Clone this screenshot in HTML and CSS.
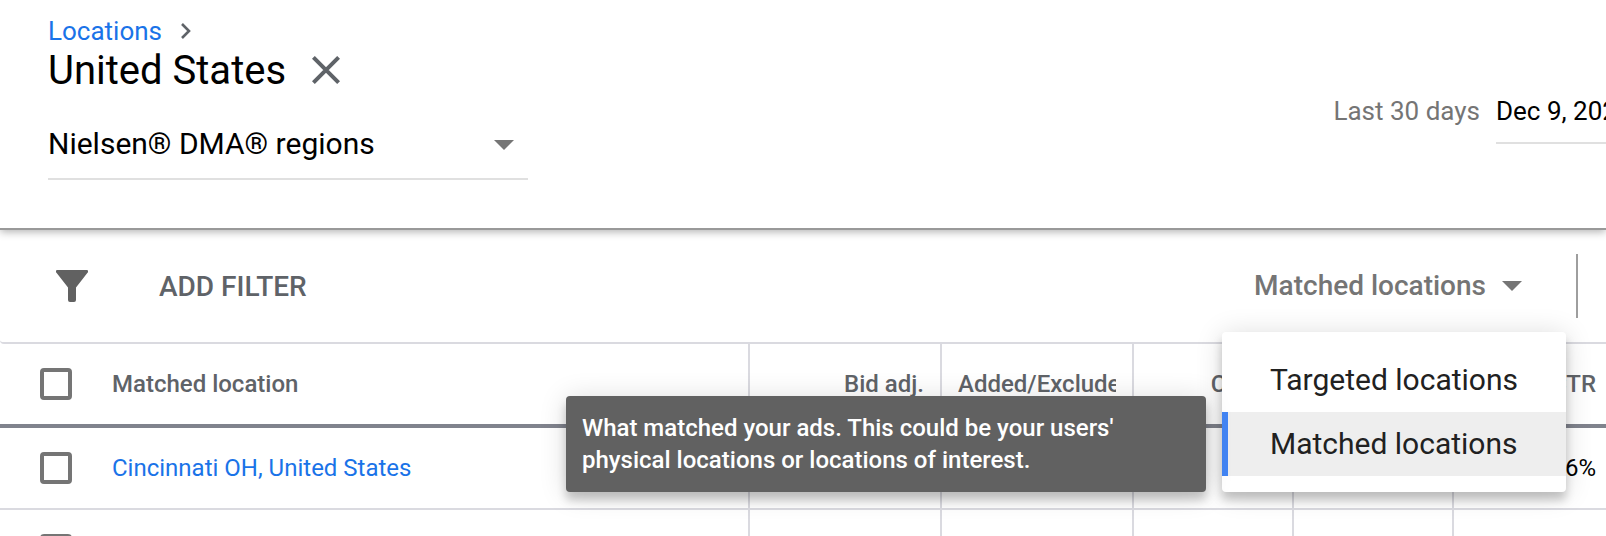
FILE: index.html
```html
<!DOCTYPE html>
<html lang="en">
<head>
<meta charset="utf-8">
<meta name="viewport" content="width=device-width, initial-scale=1">
<title>Locations</title>
<link rel="stylesheet" href="styles.css">
</head>
<body>
<header class="header">
  <div class="heading">
    <nav class="breadcrumb" aria-label="Breadcrumb">
      <a class="link" href="#locations">Locations</a>
      <svg class="chevron" viewBox="0 0 12 16" aria-hidden="true"><path d="M2 1l7 7-7 7" fill="none" stroke="#5f6368" stroke-width="2.6"/></svg>
    </nav>
    <div class="title-row">
      <h1 class="title">United States</h1>
      <button class="icon-button" type="button" aria-label="Close">
        <svg class="close" viewBox="0 0 28 28" aria-hidden="true"><path d="M1.4 1.4l25.200 25.200M26.600 1.400l-25.200 25.200" fill="none" stroke="#5f6368" stroke-width="4"/></svg>
      </button>
    </div>
    <div class="region">
      <select class="region-select" aria-label="Location type">
        <option>Nielsen® DMA® regions</option>
      </select>
      <svg class="arrow" viewBox="0 0 20 10" aria-hidden="true"><path d="M0 0h20L10 10z" fill="#757575"/></svg>
    </div>
  </div>
  <div class="dates">
    <span class="dates-label">Last 30 days</span>
    <button class="dates-value" type="button">Dec 9, 2020 – Jan 7, 2021</button>
  </div>
</header>
<main>
  <div class="toolbar">
    <svg class="funnel" viewBox="0 0 32 32" aria-hidden="true"><path d="M1.500 0h29a1.500 1.500 0 0 1 1.200 2.600L20 17.500V30a2 2 0 0 1-2 2h-4a2 2 0 0 1-2-2V17.500L.3 2.600A1.500 1.500 0 0 1 1.500 0z" fill="#616161"/></svg>
    <button class="add-filter" type="button">ADD FILTER</button>
    <div class="view">
      <button class="view-button" type="button" aria-haspopup="true" aria-expanded="true">
        Matched locations
        <svg class="arrow" viewBox="0 0 20 10" aria-hidden="true"><path d="M0 0h20L10 10z" fill="#757575"/></svg>
      </button>
      <div class="menu" role="menu">
        <button class="menu-item" type="button" role="menuitem">Targeted locations</button>
        <button class="menu-item selected" type="button" role="menuitem" aria-describedby="view-tip">Matched locations</button>
        <div class="tooltip" id="view-tip" role="tooltip">What matched your ads. This could be your users' physical locations or locations of interest.</div>
      </div>
    </div>
  </div>
  <table class="table">
    <colgroup><col class="col-name"><col class="col-wide"><col class="col-wide"><col class="col-num"><col class="col-num"><col class="col-num"></colgroup>
    <thead>
      <tr>
        <th class="name" scope="col"><div class="name-cell"><input class="check" type="checkbox" aria-label="Select all rows"><span>Matched location</span></div></th>
        <th scope="col">Bid adj.</th>
        <th class="text" scope="col"><div class="clip">Added/Excluded</div></th>
        <th scope="col">Clicks</th>
        <th scope="col"></th>
        <th scope="col">CTR</th>
      </tr>
    </thead>
    <tbody>
      <tr>
        <td class="name"><div class="name-cell"><input class="check" type="checkbox" aria-label="Select Cincinnati OH"><a class="link" href="#cincinnati">Cincinnati OH, United States</a></div></td>
        <td></td><td></td><td></td><td></td><td>6%</td>
      </tr>
      <tr>
        <td class="name"><div class="name-cell"><input class="check" type="checkbox" aria-label="Select row"></div></td>
        <td></td><td></td><td></td><td></td><td></td>
      </tr>
    </tbody>
  </table>
</main>
</body>
</html>
```

FILE: styles.css
```css
* { box-sizing: border-box; }
body {
  margin: 0;
  height: 100vh;
  overflow: hidden;
  background: #fff;
  color: #000;
  font-family: Roboto, "Liberation Sans", sans-serif;
}
button, select {
  margin: 0;
  padding: 0;
  border: 0;
  background: none;
  color: inherit;
  font: inherit;
}
svg { display: block; flex: none; }
.link { color: #1a73e8; text-decoration: none; }
.arrow { width: 20px; height: 10px; }

.header {
  position: relative;
  display: flex;
  justify-content: space-between;
  padding: 16px 0 48px 48px;
  border-bottom: 2px solid #999;
  box-shadow: 0 2px 8px rgba(0, 0, 0, 0.3);
}
.breadcrumb {
  display: flex;
  align-items: center;
  gap: 18px;
  font-size: 26px;
  line-height: 30px;
}
.chevron { width: 12px; height: 16px; }
.title-row { display: flex; align-items: center; gap: 26px; }
.title { margin: 0; padding-top: 2px; font-size: 40px; font-weight: 400; line-height: 46px; }
.close { width: 28px; height: 28px; }
.region {
  display: flex;
  align-items: center;
  width: 480px;
  margin-top: 14px;
  border-bottom: 2px solid #e0e0e0;
}
.region-select {
  width: 100%;
  height: 70px;
  margin-right: -34px;
  padding-right: 34px;
  appearance: none;
  font-size: 30px;
}
.region .arrow { margin-top: 4px; pointer-events: none; }
.dates {
  display: flex;
  align-items: flex-start;
  gap: 16px;
  padding-top: 64px;
  font-size: 26px;
  line-height: 62px;
}
.dates-label { color: #757575; }
.dates-value {
  width: 110px;
  overflow: hidden;
  border-bottom: 2px solid #e0e0e0;
  text-align: left;
  white-space: nowrap;
}

.toolbar {
  display: flex;
  align-items: center;
  height: 114px;
  padding: 0 28px 0 56px;
  border-bottom: 2px solid #dadae0;
  border-bottom-left-radius: 4px;
  font-size: 28px;
  font-weight: 500;
}
.funnel { width: 32px; height: 32px; }
.add-filter { margin-left: 71px; color: #5f6368; }
.view {
  position: relative;
  margin-left: auto;
  padding-right: 54px;
  border-right: 2px solid #9e9e9e;
  color: #757575;
  line-height: 64px;
}
.view-button { display: flex; align-items: center; gap: 16px; }
.menu {
  position: absolute;
  z-index: 1;
  top: 78px;
  right: 10px;
  width: 344px;
  padding: 16px 0;
  border-radius: 4px;
  background: #fff;
  box-shadow: 0 8px 10px rgba(0, 0, 0, 0.2), 0 2px 28px rgba(0, 0, 0, 0.14);
  color: #212121;
  font-size: 30px;
  font-weight: 400;
}
.menu-item {
  display: block;
  width: 100%;
  padding-left: 42px;
  border-left: 6px solid transparent;
  text-align: left;
  white-space: nowrap;
}
.selected { border-left-color: #4285f4; background: #eee; }
.tooltip {
  position: absolute;
  right: 360px;
  bottom: 0;
  width: 640px;
  padding: 16px;
  border-radius: 4px;
  background: #616161;
  box-shadow: 0 8px 10px rgba(0, 0, 0, 0.2), 0 2px 28px rgba(0, 0, 0, 0.14);
  color: #fff;
  font-size: 24px;
  font-weight: 500;
  line-height: 32px;
}

.table {
  width: calc(100% + 8px);
  table-layout: fixed;
  border-collapse: separate;
  border-spacing: 0;
  font-size: 24px;
  line-height: 32px;
}
.col-wide { width: 192px; }
.col-num { width: 160px; }
th, td {
  height: 82px;
  padding: 0 16px;
  border-right: 2px solid #dadae0;
  border-bottom: 2px solid #dadae0;
  text-align: right;
  white-space: nowrap;
}
th {
  height: 84px;
  border-bottom: 4px solid #80838d;
  color: #5f6368;
  font-weight: 500;
}
.name { padding-left: 40px; }
.name, .text { text-align: left; }
.name-cell { display: flex; align-items: center; gap: 40px; }
.clip { overflow: hidden; }
.check {
  width: 32px;
  height: 32px;
  margin: 0;
  border: 4px solid #757575;
  border-radius: 4px;
  appearance: none;
}
.check:checked { background: #4285f4; }
```
